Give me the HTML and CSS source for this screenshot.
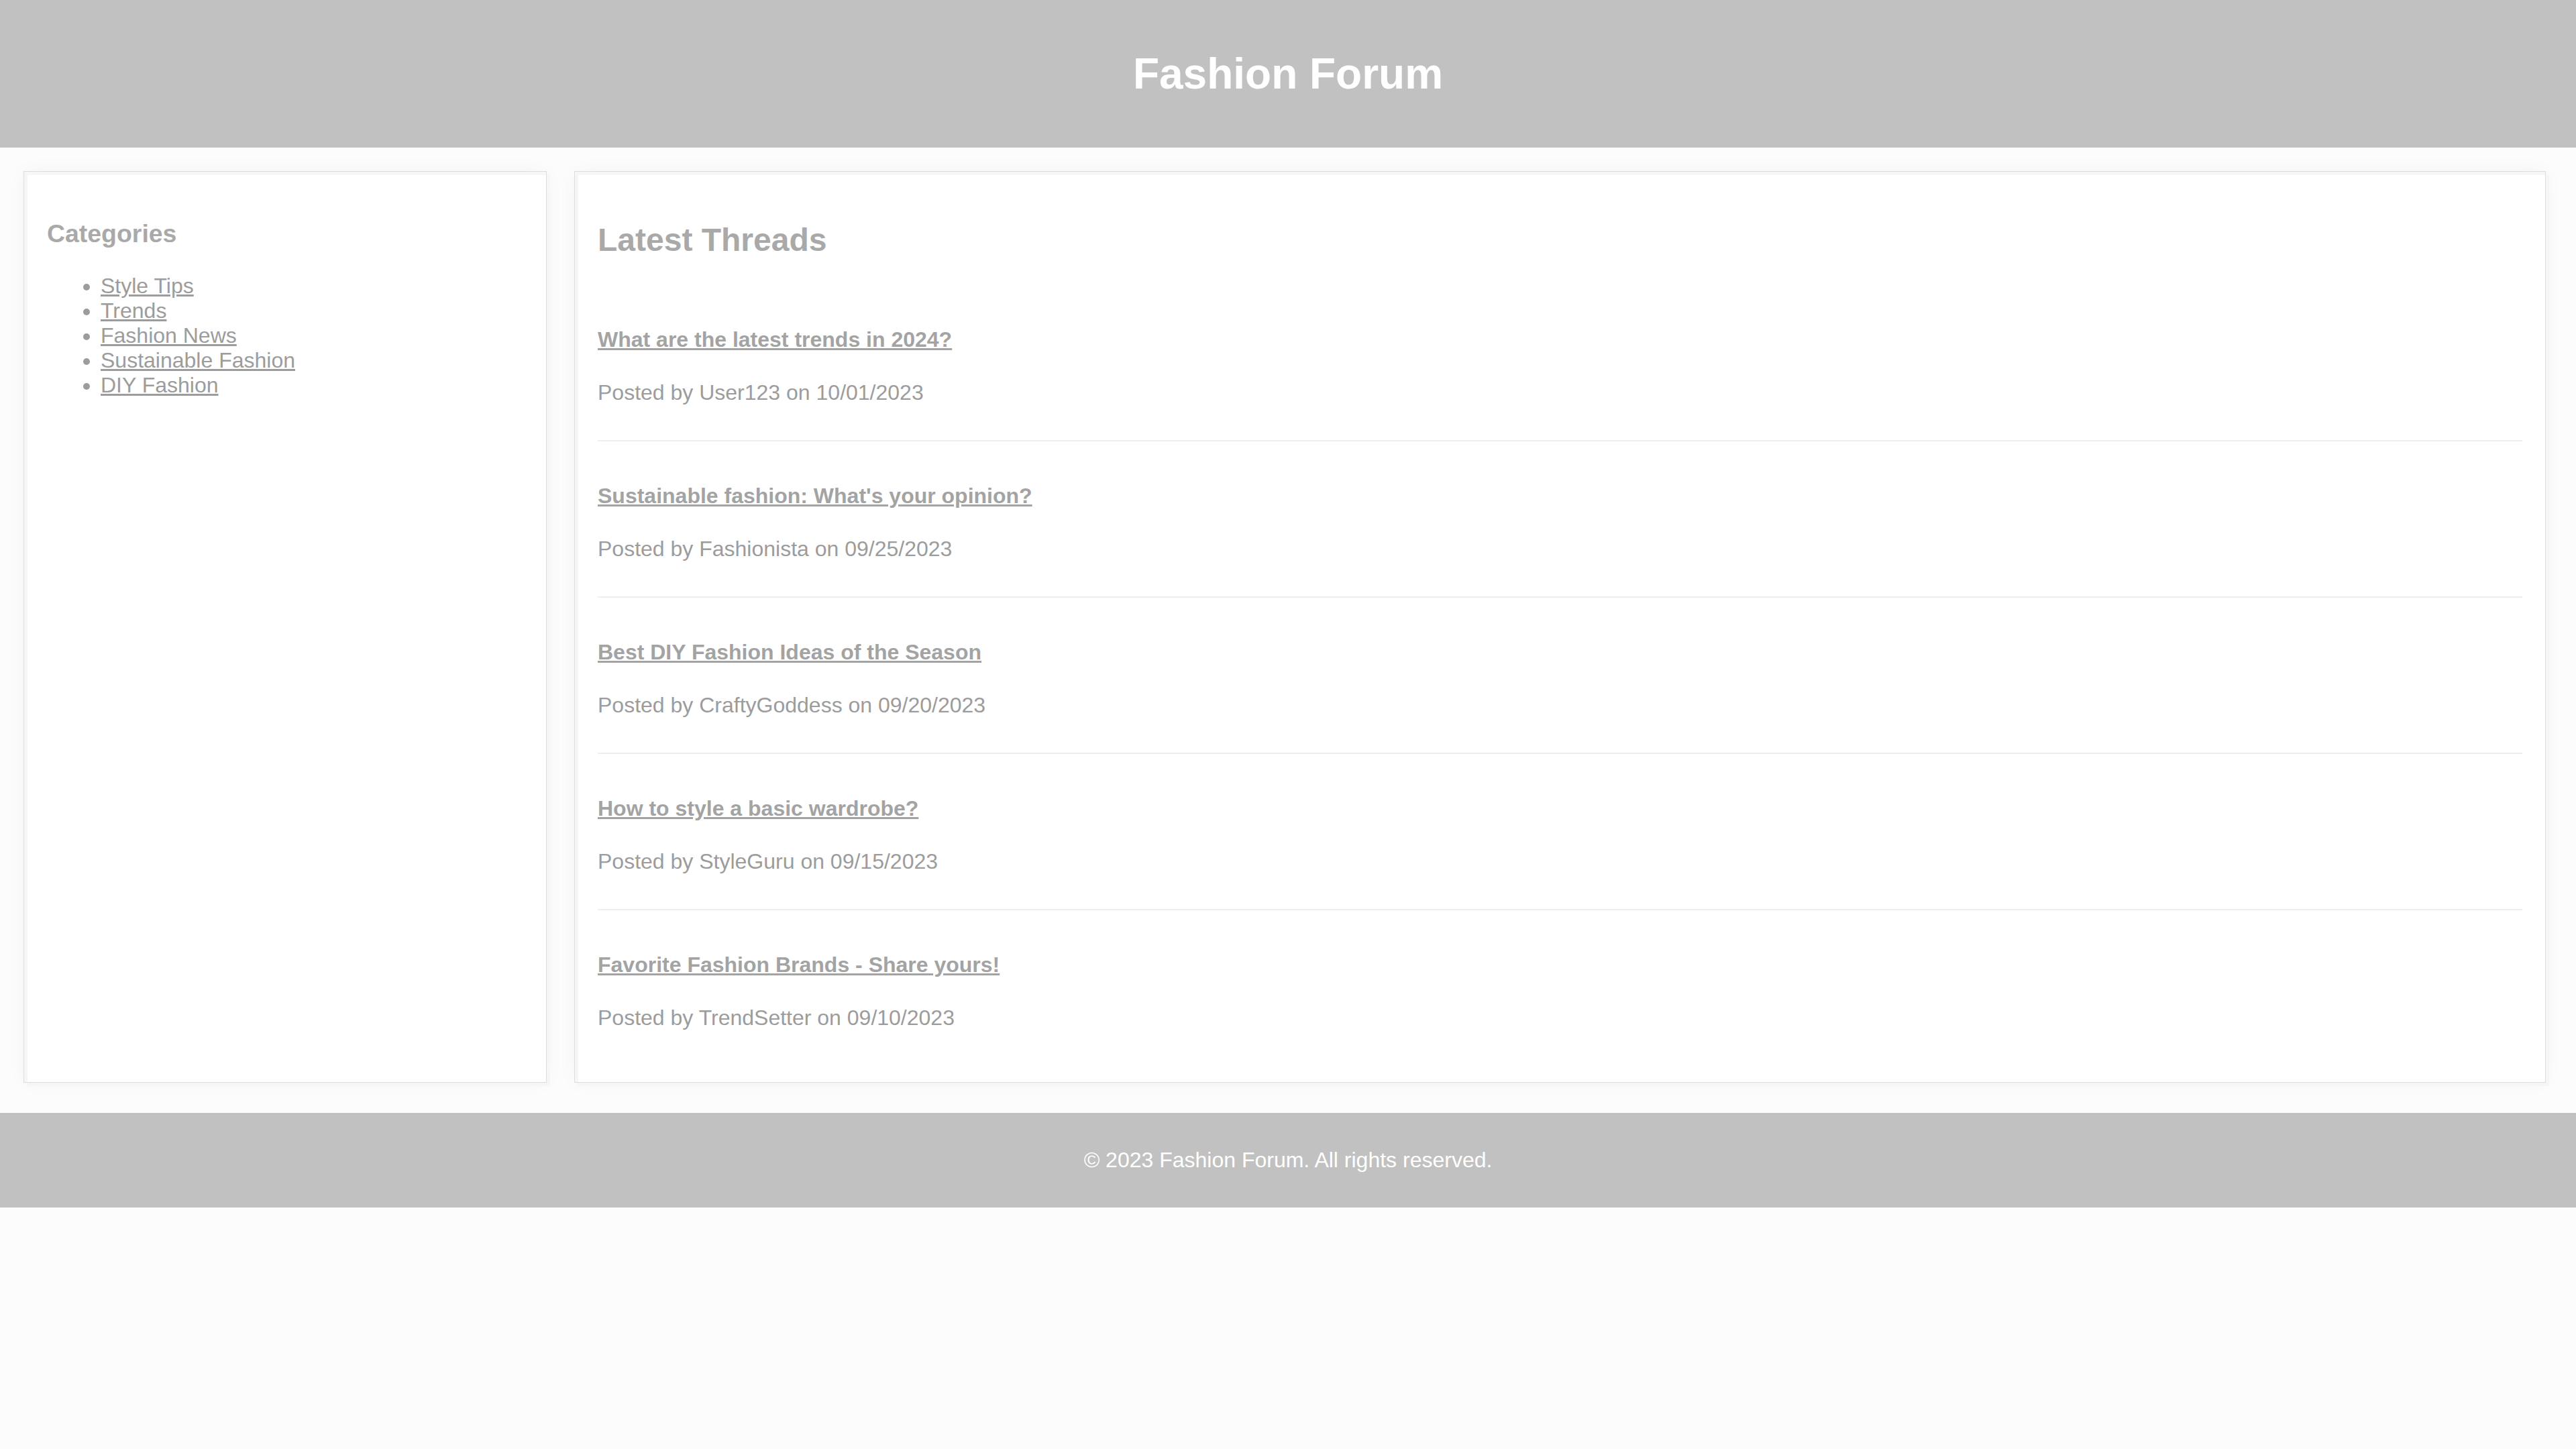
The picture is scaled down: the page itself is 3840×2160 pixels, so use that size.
FILE: index.html
```html
<!DOCTYPE html>
<html lang="en">
<head>
<meta charset="utf-8">
<title>Fashion Forum</title>
<link rel="stylesheet" href="styles.css">
</head>
<body>
<header class="site-header">
  <h1 class="site-title">Fashion Forum</h1>
</header>
<div class="layout">
  <aside class="card sidebar">
    <h3 class="card-heading">Categories</h3>
    <ul class="category-list">
      <li><a href="#">Style Tips</a></li>
      <li><a href="#">Trends</a></li>
      <li><a href="#">Fashion News</a></li>
      <li><a href="#">Sustainable Fashion</a></li>
      <li><a href="#">DIY Fashion</a></li>
    </ul>
  </aside>
  <main class="card threads">
    <h2 class="threads-heading">Latest Threads</h2>
    <div class="thread">
      <h4 class="thread-title"><a href="#">What are the latest trends in 2024?</a></h4>
      <p class="thread-meta">Posted by User123 on 10/01/2023</p>
    </div>
    <div class="thread">
      <h4 class="thread-title"><a href="#">Sustainable fashion: What's your opinion?</a></h4>
      <p class="thread-meta">Posted by Fashionista on 09/25/2023</p>
    </div>
    <div class="thread">
      <h4 class="thread-title"><a href="#">Best DIY Fashion Ideas of the Season</a></h4>
      <p class="thread-meta">Posted by CraftyGoddess on 09/20/2023</p>
    </div>
    <div class="thread">
      <h4 class="thread-title"><a href="#">How to style a basic wardrobe?</a></h4>
      <p class="thread-meta">Posted by StyleGuru on 09/15/2023</p>
    </div>
    <div class="thread">
      <h4 class="thread-title"><a href="#">Favorite Fashion Brands - Share yours!</a></h4>
      <p class="thread-meta">Posted by TrendSetter on 09/10/2023</p>
    </div>
  </main>
</div>
<footer class="site-footer">
  <p class="footer-text">&copy; 2023 Fashion Forum. All rights reserved.</p>
</footer>
</body>
</html>
```

FILE: styles.css
```css
html, body {
  margin: 0;
  padding: 0;
}

body {
  font-family: "Liberation Sans", Arial, sans-serif;
  font-size: 32px;
  background: #fcfcfc;
  color: #9c9c9c;
}

.site-header {
  background: #c1c1c1;
  padding: 30px;
  text-align: center;
}

.site-title {
  margin: 43px 0;
  font-size: 64px;
  font-weight: bold;
  color: #ffffff;
}

.layout {
  display: flex;
  align-items: stretch;
  gap: 41px;
  padding: 35px 45px 45px 35px;
}

.card {
  box-sizing: border-box;
  background: #ffffff;
  border: 1px solid #dddddd;
  padding: 34px 34px 25px 34px;
  box-shadow:
    inset 5px 5px 0 #f6f6f6,
    5px 5px 0 #f6f6f6,
    0 0 28px rgba(0, 0, 0, 0.035);
}

.sidebar {
  width: 780px;
  flex: 0 0 780px;
}

.threads {
  flex: 1 1 auto;
  min-width: 0;
}

.card-heading {
  font-size: 1.17em;
  margin: 1em 0;
  color: #a9a9a9;
}

.category-list {
  margin: 1em 0;
  padding-left: 80px;
  color: #9c9c9c;
}

.category-list a {
  color: #9c9c9c;
  text-decoration: underline;
}

.threads-heading {
  font-size: 48px;
  margin: 40px 0;
  color: #a9a9a9;
}

.thread {
  padding: 20px 0;
  border-bottom: 2px solid #eeeeee;
}

.thread:last-child {
  border-bottom: none;
}

.thread-title {
  font-size: 32px;
  margin: 42.5px 0;
}

.thread-title a {
  color: #a3a3a3;
  text-decoration: underline;
}

.thread-meta {
  margin: 32px 0;
  color: #9c9c9c;
}

.site-footer {
  background: #c1c1c1;
  padding: 20px;
  text-align: center;
}

.footer-text {
  margin: 32px 0;
  color: #ffffff;
}
```
